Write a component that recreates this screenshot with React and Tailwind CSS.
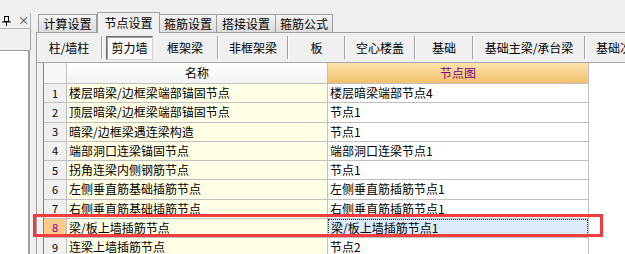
import React from 'react'

// ---- Onglets principaux ----
const TABS = [
  { label: '计算设置', w: 'w-[59px]' },
  { label: '节点设置', w: 'w-[63px]', actif: true },
  { label: '箍筋设置', w: 'w-[58px]' },
  { label: '搭接设置', w: 'w-[60px]' },
  { label: '箍筋公式', w: 'w-[58px]' },
]

// ---- Sous-onglets (types d'éléments) ----
const SOUS_TABS = [
  { label: '柱/墙柱', w: 'w-[64px]' },
  { label: '剪力墙', w: 'w-[50px]', actif: true },
  { label: '框架梁', w: 'w-[64px]' },
  { label: '非框架梁', w: 'w-[68px]' },
  { label: '板', w: 'w-[55px]' },
  { label: '空心楼盖', w: 'w-[68px]' },
  { label: '基础', w: 'w-[56px]' },
  { label: '基础主梁/承台梁', w: 'w-[110px]' },
]

const LIGNES = [
  { nom: '楼层暗梁/边框梁端部锚固节点', noeud: '楼层暗梁端部节点4' },
  { nom: '顶层暗梁/边框梁端部锚固节点', noeud: '节点1' },
  { nom: '暗梁/边框梁遇连梁构造', noeud: '节点1' },
  { nom: '端部洞口连梁锚固节点', noeud: '端部洞口连梁节点1' },
  { nom: '拐角连梁内侧钢筋节点', noeud: '节点1' },
  { nom: '左侧垂直筋基础插筋节点', noeud: '左侧垂直筋插筋节点1' },
  { nom: '右侧垂直筋基础插筋节点', noeud: '右侧垂直筋插筋节点1' },
  { nom: '梁/板上墙插筋节点', noeud: '梁/板上墙插筋节点1', selection: true },
  { nom: '连梁上墙插筋节点', noeud: '节点2' },
]

function Separateur() {
  return <div className="w-[2px] h-[23px] shrink-0 border-l border-[#a0a0a0] border-r border-r-white" />
}

export default function App() {
  return (
    <div className="relative w-[625px] h-[254px] overflow-hidden bg-[#f0f0f0] flex text-[12px] leading-none text-black font-['Noto_Sans_CJK_SC','Liberation_Sans',sans-serif]">
      {/* ---- Panneau gauche (ancré) ---- */}
      <div className="w-[31px] shrink-0 flex flex-col pt-[13px]">
        <div className="h-[16px] flex items-center gap-[7px] pl-[2px] border-r border-b border-[#b4b4b4]">
          <svg width="9" height="10" viewBox="0 0 9 10" className="shrink-0">
            <rect x="2.5" y="0.5" width="4" height="5" fill="none" stroke="#000" />
            <line x1="0" y1="6" x2="9" y2="6" stroke="#000" />
            <line x1="4.5" y1="6" x2="4.5" y2="10" stroke="#000" />
          </svg>
          <span className="text-[11px] leading-none text-[#333]">×</span>
        </div>
        <div className="h-[21px] border-r border-[#a0a0a0]" />
        <div className="flex-1 bg-white border-t border-r-2 border-[#a0a0a0] mr-[1px]" />
      </div>

      {/* ---- Zone principale ---- */}
      <div className="flex-1 min-w-0 flex flex-col pl-[5px] pt-[12px]">
        {/* Onglets */}
        <div className="h-[20px] flex items-end pl-[2px] relative z-10 shrink-0">
          {TABS.map((t) =>
            t.actif ? (
              <div
                key={t.label}
                className={`${t.w} h-[21px] -mb-[1px] flex items-center justify-center bg-[#f0f0f0] border-t border-l border-r border-[#a0a0a0] text-[12px]`}
              >
                {t.label}
              </div>
            ) : (
              <div
                key={t.label}
                className={`${t.w} h-[18px] flex items-center justify-center bg-gradient-to-b from-[#f4f4f4] to-[#dcdcdc] border-t border-l border-r border-[#9c9c9c] -ml-[1px] first:ml-0 text-[12px]`}
              >
                {t.label}
              </div>
            )
          )}
        </div>

        {/* Contenu de l'onglet */}
        <div className="flex-1 min-h-0 flex flex-col border-t border-l border-[#a0a0a0] bg-[#f0f0f0]">
          {/* Sous-onglets */}
          <div className="h-[30px] shrink-0 flex items-center border-b border-[#a8a8a8] whitespace-nowrap">
            {SOUS_TABS.map((s) =>
              s.actif ? (
                <div key={s.label} className={`${s.w} shrink-0 flex justify-end`}>
                  <div className="w-[47px] h-[24px] flex items-center justify-center bg-[#f8f8f8] border border-t-[#6a6a6a] border-l-[#6a6a6a] border-r-[#cfcfcf] border-b-[#cfcfcf] shadow-[inset_1px_1px_0_#a0a0a0]">
                    {s.label}
                  </div>
                </div>
              ) : (
                <React.Fragment key={s.label}>
                  <div className={`${s.w} shrink-0 flex items-center justify-center`}>{s.label}</div>
                  <Separateur />
                </React.Fragment>
              )
            )}
            <div className="pl-[10px] shrink-0">基础次梁/承台梁</div>
          </div>

          {/* Grille des noeuds */}
          <div className="ml-[6px] flex-1 bg-white border-l border-[#808080] flex flex-col">
            {/* En-tête */}
            <div className="h-[21px] shrink-0 flex">
              <div className="w-[23px] border-r border-b border-[#c0c0c0] bg-[#f7f7f7]" />
              <div className="w-[261px] border-r border-b border-[#c0c0c0] bg-gradient-to-b from-white to-[#f3f3f3] flex items-center justify-center">
                名称
              </div>
              <div className="w-[261px] border-r border-b border-[#c0c0c0] bg-gradient-to-b from-[#fbe3ad] to-[#f2c06a] flex items-center justify-center text-[#800080]">
                节点图
              </div>
            </div>

            {/* Lignes */}
            {LIGNES.map((l, i) => (
              <div key={i} className="h-[19.25px] shrink-0 flex">
                <div
                  className={`w-[23px] border-r border-b border-[#c0c0c0] flex items-center justify-center text-[11px] ${
                    l.selection ? 'bg-[#fbc98a] text-[#800080]' : 'bg-[#f0f0f0]'
                  }`}
                >
                  {i + 1}
                </div>
                <div className="w-[261px] border-r border-b border-[#c0c0c0] bg-[#ffffe6] flex items-center pl-[2px]">
                  {l.nom}
                </div>
                <div className="w-[261px] border-r border-b border-[#c0c0c0] flex">
                  <div
                    className={`flex-1 flex items-center pl-[2px] ${
                      l.selection ? 'bg-[#dcebfc] border border-dotted border-[#333]' : ''
                    }`}
                  >
                    {l.noeud}
                  </div>
                </div>
              </div>
            ))}
          </div>
        </div>
      </div>

      {/* Encadré rouge d'annotation */}
      <div className="absolute left-[33px] top-[214px] w-[570px] h-[23px] border-[3px] border-[#f03c3c] pointer-events-none" />
    </div>
  )
}
